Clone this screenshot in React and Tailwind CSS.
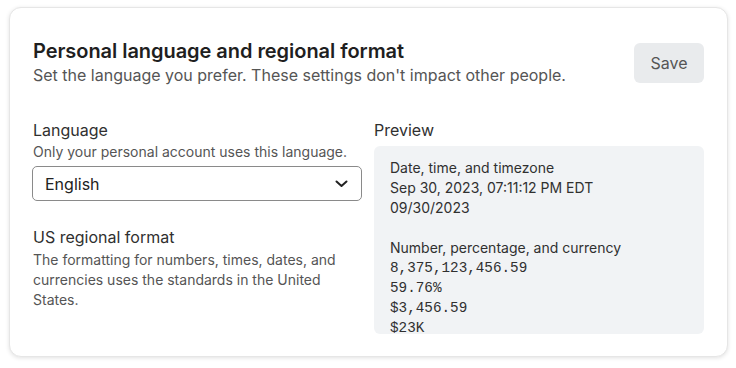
export default function App() {
  const font = { fontFamily: 'Inter, "Noto Sans", sans-serif' };
  return (
    <div className="w-[736px] h-[368px] bg-white pt-[7px] pl-[9px]" style={font}>
      <div className="w-[719px] h-[350px] rounded-[12px] border border-[#e6e6e6] bg-white shadow-[0_1px_4px_rgba(0,0,0,0.12)] pl-[22px] pr-[23px] pt-[31px] overflow-hidden">
        <div className="flex justify-between items-start">
          <div className="pl-[1px]">
            <h1 className="text-[20px] leading-[24px] font-semibold text-[#1f1f1f] tracking-[-0.05px]">
              Personal language and regional format
            </h1>
            <p className="mt-[2px] text-[16px] leading-[20px] text-[#555555]">
              Set the language you prefer. These settings don't impact other people.
            </p>
          </div>
          <button className="mt-[4px] w-[70px] h-[40px] rounded-[6px] bg-[#e9ebed] text-[16px] text-[#555] ">
            Save
          </button>
        </div>
        <div className="mt-[35px] grid grid-cols-[330px_330px] gap-x-[12px]">
          <div>
            <div className="pl-[1px] text-[16px] leading-[20px] text-[#303030]">Language</div>
            <div className="pl-[1px] mt-[2px] text-[14px] leading-[20px] text-[#555]">
              Only your personal account uses this language.
            </div>
            <div className="mt-[4px] h-[35px] rounded-[5px] border border-[#8a8a8a] flex items-center justify-between pl-[12px] pr-[13px]">
              <span className="text-[16px] text-[#222]">English</span>
              <svg width="13" height="8" viewBox="0 0 13 8" fill="none">
                <path d="M1.5 1.5 L6.5 6 L11.5 1.5" stroke="#222" strokeWidth="2" strokeLinecap="round" strokeLinejoin="round" />
              </svg>
            </div>
            <div className="pl-[1px] mt-[26px] text-[16px] leading-[20px] text-[#303030]">US regional format</div>
            <div className="pl-[1px] mt-[3px] text-[14px] leading-[20px] text-[#555] pr-[10px]">
              The formatting for numbers, times, dates, and currencies uses the standards in the United States.
            </div>
          </div>
          <div>
            <div className="text-[16px] leading-[20px] text-[#303030]">Preview</div>
            <div className="mt-[6px] h-[188px] rounded-[6px] bg-[#f1f3f5] overflow-hidden px-[16px] pt-[12px] text-[14px] leading-[20px] text-[#303030]">
              <div>Date, time, and timezone</div>
              <div>Sep 30, 2023, 07:11:12 PM EDT</div>
              <div>09/30/2023</div>
              <div className="h-[20px]"></div>
              <div>Number, percentage, and currency</div>
              <div style={{ fontFamily: '"Liberation Mono", monospace' }} className="text-[14.3px]">
                <div>8,375,123,456.59</div>
                <div>59.76%</div>
                <div>$3,456.59</div>
                <div>$23K</div>
              </div>
            </div>
          </div>
        </div>
      </div>
    </div>
  );
}
